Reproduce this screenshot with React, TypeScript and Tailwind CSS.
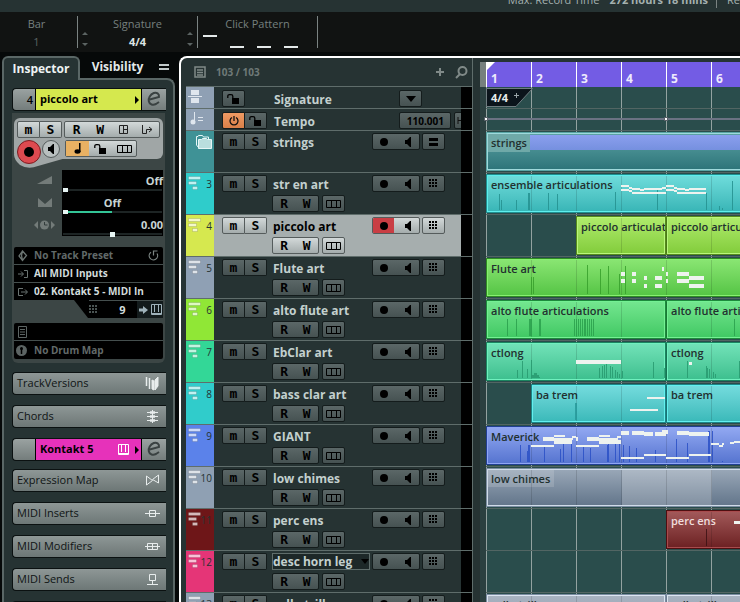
import type { ReactNode } from "react";

type Rect = [number, number, number, number];

interface Clip {
  start: number;
  bars?: number;
  name: string;
}

interface Track {
  no?: number;
  name: string;
  strip: string;
  clip?: string;
  label?: string;
  clips?: Clip[];
  tick?: string;
  // x, top, optional width
  ticks?: number[][];
  notes?: Rect[];
  selected?: boolean;
  menu?: boolean;
}

const BAR = 45;

const line = (y: number, pts: number[][]): Rect[] => pts.map(([a, b, dy]) => [a, y + dy, b - a, 2]);

const tracks: Track[] = [
  {
    no: 3,
    name: "str en art",
    strip: "bg-[#2fcccb]",
    clip: "from-[#6fdddc] to-[#37b5b6] border-[#1f8f90] inset-shadow-[0_0_0_1px_#5eeeec]",
    clips: [{ start: 0, name: "ensemble articulations" }],
    tick: "#25918f",
    ticks: [[13, 21], [15, 27], [30, 27], [42, 20, 2], [62, 20], [71, 21], [129, 19], [171, 16], [220, 20], [233, 33], [236, 35], [246, 8]],
    notes: [
      ...line(12, [[135, 143, 0], [143, 146, 2], [146, 154, 3], [154, 158, 4], [158, 176, 3], [176, 180, 2], [180, 188, 0], [188, 191, 2], [191, 199, 3], [199, 203, 4], [203, 220, 3]]),
      ...line(16, [[135, 143, 0], [143, 146, 1], [146, 180, 3], [180, 188, 0], [188, 191, 1], [191, 220, 3]]),
    ],
  },
  {
    no: 4,
    name: "piccolo art",
    strip: "bg-[#d6e84f]",
    clip: "from-[#b0ec6c] to-[#82cc3a] border-[#568a1c] inset-shadow-[0_0_0_1px_#b9f77c]",
    clips: [{ start: 2, bars: 2, name: "piccolo articulations" }, { start: 4, name: "piccolo articulations" }],
    selected: true,
  },
  {
    no: 5,
    name: "Flute art",
    strip: "bg-[#8fa0b4]",
    clip: "from-[#8ae673] to-[#54c444] border-[#2f8a22] inset-shadow-[0_0_0_1px_#86f070]",
    clips: [{ start: 0, name: "Flute art" }],
    tick: "#37a02c",
    ticks: [[45, 20], [47, 20], [101, 8], [114, 12], [122, 9], [133, 17], [139, 9]],
    notes: [
      [135, 15, 4, 4], [135, 22, 4, 4], [146, 15, 4, 4], [146, 22, 4, 4], [158, 19, 3, 4], [158, 27, 3, 4],
      [169, 19, 7, 4], [169, 27, 7, 4], [176, 10, 2, 4], [180, 15, 2, 4], [180, 22, 2, 4],
      [191, 15, 12, 4], [191, 22, 12, 4], [203, 19, 15, 4], [203, 27, 15, 4],
    ],
  },
  {
    no: 6,
    name: "alto flute art",
    strip: "bg-[#90e736]",
    clip: "from-[#74e790] to-[#3fc863] border-[#1d8a3c] inset-shadow-[0_0_0_1px_#74f093]",
    clips: [{ start: 0, bars: 4, name: "alto flute articulations" }, { start: 4, name: "alto flute articulations" }],
    tick: "#2aa04c",
    ticks: [[21, 20], [30, 20], [43, 20, 3], [53, 20, 2], [88, 20], [90, 20], [92, 20], [94, 20], [96, 20], [98, 20, 2], [101, 20], [103, 20], [105, 20], [107, 20], [248, 20]],
  },
  {
    no: 7,
    name: "EbClar art",
    strip: "bg-[#33d797]",
    clip: "from-[#72e3b9] to-[#3cbf8e] border-[#1b8560] inset-shadow-[0_0_0_1px_#70f0be]",
    clips: [{ start: 0, bars: 4, name: "ctlong" }, { start: 4, name: "ctlong" }],
    tick: "#289a70",
    ticks: [[31, 29], [36, 20], [41, 28], [45, 19], [46, 34, 2], [48, 32, 3], [51, 34, 2], [53, 36, 1], [113, 27], [116, 25], [118, 24], [120, 23], [124, 25], [126, 26], [129, 29], [131, 31], [133, 33], [136, 30], [167, 21], [178, 27], [201, 20], [220, 25], [221, 27], [223, 28], [227, 31], [229, 33], [253, 20]],
    notes: [[90, 19, 45, 4], [203, 21, 3, 3]],
  },
  {
    no: 8,
    name: "bass clar art",
    strip: "bg-[#30cccb]",
    clip: "from-[#74dcde] to-[#39b9b9] border-[#1c8587] inset-shadow-[0_0_0_1px_#62f0ee]",
    clips: [{ start: 1, bars: 3, name: "ba trem" }, { start: 4, name: "ba trem" }],
    tick: "#27999a",
    ticks: [[89, 20, 2]],
    notes: [[161, 14, 18, 2], [144, 26, 28, 2]],
  },
  {
    no: 9,
    name: "GIANT",
    strip: "bg-[#5b82ea]",
    clip: "from-[#93a9f2] to-[#5573cf] border-[#213f92] inset-shadow-[0_0_0_1px_#8fa6f5]",
    clips: [{ start: 0, name: "Maverick" }],
    tick: "#2a50c6",
    ticks: [[34, 20], [41, 26], [42, 20, 2], [58, 22], [74, 24], [77, 19], [85, 19], [97, 22], [104, 23], [121, 20], [122, 19], [129, 19], [133, 16], [137, 20], [143, 21], [150, 23], [169, 25], [190, 14], [201, 18], [222, 6, 2], [226, 6], [236, 36]],
    notes: [
      [57, 12, 11, 4], [68, 10, 11, 2], [68, 13, 19, 2], [68, 15, 18, 4], [86, 11, 4, 2], [90, 12, 2, 4], [45, 20, 23, 2],
      [101, 12, 12, 4], [113, 10, 11, 2], [113, 13, 19, 2], [113, 15, 22, 4], [131, 11, 4, 2], [90, 20, 23, 2],
      [135, 6, 8, 4], [146, 6, 12, 4], [158, 7, 9, 4], [169, 7, 11, 4], [176, 5, 6, 4], [191, 6, 12, 4], [203, 7, 20, 4],
      [135, 32, 23, 2], [158, 29, 22, 2], [180, 32, 23, 2], [203, 29, 22, 2],
      [225, 18, 8, 2], [233, 20, 4, 2], [236, 18, 2, 2], [244, 17, 4, 2], [248, 16, 6, 2],
    ],
  },
  {
    no: 10,
    name: "low chimes",
    strip: "bg-[#8fa0b3]",
    clip: "from-[#9aa8b8] to-[#62758a] border-[#7b8da2] inset-shadow-[0_0_0_1px_#cfdbe8]",
    clips: [{ start: 0, name: "low chimes" }],
  },
  {
    no: 11,
    name: "perc ens",
    strip: "bg-[#6e1618]",
    clip: "from-[#a35a5b] to-[#6c2022] border-[#4d0f11] inset-shadow-[0_0_0_1px_#a84b4d]",
    label: "text-[#f0dede]",
    clips: [{ start: 4, name: "perc ens" }],
    tick: "#3c1214",
    ticks: [[220, 20]],
    notes: [[248, 12, 6, 3]],
  },
  { no: 12, name: "desc horn leg", strip: "bg-[#e53577]", menu: true },
  {
    no: 13,
    name: "cello trill",
    strip: "bg-[#8fa0b3]",
    clip: "from-[#a9b4c2] to-[#8795a6] border-[#7b8da2] inset-shadow-[0_0_0_1px_#dbe5f0]",
    clips: [{ start: 0, bars: 4, name: "cello trill" }, { start: 4, name: "cello trill" }],
  },
];

const btn = "flex items-center justify-center rounded-[2px] border border-[#141c1c] bg-linear-to-b from-[#5b6767] to-[#465252] text-black";
const litBtn = "flex items-center justify-center rounded-[2px] border border-[#555c5c] bg-linear-to-b from-[#d3d9d9] to-[#a4acac] text-black";

function Speaker() {
  return (
    <svg width="7" height="10" viewBox="0 0 7 10" fill="currentColor"><path d="M0 3h2l3-3h1v10h-1l-3-3h-2z" /></svg>
  );
}

function Dots() {
  return (
    <svg width="9" height="9" viewBox="0 0 9 9" fill="currentColor">
      {[0, 3, 6].map((y) => [0, 3, 6].map((x) => <rect key={`${x}${y}`} x={x} y={y} width="2" height="2" />))}
    </svg>
  );
}

function Lanes() {
  return (
    <svg width="15" height="8" viewBox="0 0 15 8" fill="none" stroke="currentColor"><path d="M.5.5h14v7h-14zM5.5.5v7M10.5.5v7" /></svg>
  );
}

function Lock() {
  return (
    <svg width="13" height="10" viewBox="0 0 13 10" fill="currentColor">
      <path d="M5 4h7v6H5z" />
      <path d="M.8 4V2.2Q.8.7 2.5.7h1.600q1.700 0 1.700 1.500V5" fill="none" stroke="currentColor" strokeWidth="1.300" />
    </svg>
  );
}

function Swirl() {
  return (
    <svg width="14" height="16" viewBox="0 0 14 16" fill="none" stroke="#3a4242" strokeWidth="2">
      <path d="M1.800 8.800L12 6C12.500 2.500 9.500 1 6.800 2 3.200 3.300 1.200 7 1.800 10.200 2.500 13.600 6 14.500 9 13L12 11" />
    </svg>
  );
}

function Keys() {
  return (
    <svg width="11" height="11" viewBox="0 0 11 11" fill="none" stroke="currentColor"><path d="M.5.5h10v10h-10zM3.500 0v8M7.500 0v8" /><path d="M1 9.500h9" /></svg>
  );
}

function Glyph({ children }: { children: ReactNode }) {
  return <span className="block text-center font-['DejaVu_Sans_Mono'] text-[13px] leading-[15px] font-bold">{children}</span>;
}

function MuteSolo({ lit }: { lit?: boolean }) {
  return (
    <div className="flex h-[17px] w-[45px]">
      <button aria-label="Mute" className={`${lit ? litBtn : btn} flex-1 rounded-r-none`}><Glyph>m</Glyph></button>
      <button aria-label="Solo" className={`${lit ? litBtn : btn} flex-1 rounded-l-none border-l-0`}><Glyph>S</Glyph></button>
    </div>
  );
}

function RecMonitor({ lit }: { lit?: boolean }) {
  return (
    <div className={`${lit ? litBtn : btn} h-[17px] w-12 shrink-0 overflow-hidden`}>
      <button aria-label="Record enable" className={`flex h-full flex-1 items-center justify-center ${lit ? "bg-[#c93e44]" : ""}`}>
        <span className="size-2 rounded-full bg-black" />
      </button>
      <button aria-label="Monitor" className="flex h-full flex-1 items-center justify-center pl-1"><Speaker /></button>
    </div>
  );
}

function TrackRow({ track }: { track: Track }) {
  const lit = track.selected;
  const b = lit ? litBtn : btn;
  return (
    <div className="flex h-[42px] shrink-0 border-b border-[#5f6d6b]">
      <div className={`flex w-7 shrink-0 justify-between pt-[3px] pr-0.5 pl-0.5 ${track.strip}`}>
        <svg width="14" height="14" viewBox="0 0 14 14" fill="#fff" fillOpacity=".7" stroke="#000" strokeOpacity=".12">
          <path d="M.5.5h12v3h-12zM.5 5.500h8v3h-8zM4.500 10.500h5v3h-5z" />
        </svg>
        <span className="-ml-1 pt-0.5 text-[10px] leading-3 text-[#263333]">{track.no}</span>
      </div>
      <div className={`flex min-w-0 flex-1 pt-0.5 pl-2 ${lit ? "bg-[#a6aeae] text-black" : "text-[#c3d0ce]"}`}>
        <MuteSolo lit={lit} />
        <div className="ml-[5px] w-[100px]">
          {track.menu ? (
            <button className="flex h-[17px] w-[98px] items-center justify-between border border-[#5f6d6b] bg-[#1d2828] text-xs leading-4 font-bold whitespace-nowrap">
              {track.name}
              <span className="border-x-4 border-t-[5px] border-x-transparent border-t-black" />
            </button>
          ) : (
            <p className="h-[17px] pl-px text-xs leading-5 font-bold whitespace-nowrap">{track.name}</p>
          )}
          <div className="mt-[3px] flex gap-[3px]">
            <div className={`${b} h-[17px] w-[47px]`}>
              <button aria-label="Read automation" className="flex-1"><Glyph>R</Glyph></button>
              <button aria-label="Write automation" className="flex-1"><Glyph>W</Glyph></button>
            </div>
            <button aria-label="Lanes" className={`${b} h-[17px] w-[23px]`}><Lanes /></button>
          </div>
        </div>
        <RecMonitor lit={lit} />
        <button aria-label="Instrument" className={`${b} ml-0.5 h-[17px] w-[23px]`}><Dots /></button>
      </div>
      <div className="w-[11px] shrink-0 bg-black" />
    </div>
  );
}

function GridLines({ className }: { className: string }) {
  return (
    <div className="pointer-events-none absolute inset-0 flex overflow-hidden">
      {Array.from({ length: 40 }, (_, i) => (
        <span key={i} className={`w-[45px] shrink-0 border-l ${className}`} />
      ))}
    </div>
  );
}

function Lane({ track }: { track: Track }) {
  return (
    <div className="relative h-[42px] shrink-0 overflow-hidden border-b border-[#526563]">
      <GridLines className="border-[#93a2a0]" />
      {track.clips?.map((c) => (
        <div
          key={c.start}
          className={`absolute top-px h-[39px] overflow-hidden border bg-linear-to-b ${track.clip}`}
          style={{ left: c.start * BAR, width: c.bars ? c.bars * BAR : `calc(100% + 4px - ${c.start * BAR}px)` }}
        >
          {track.no === 10 && (
            <>
              <span className="absolute top-px left-px h-[17px] w-[66px] bg-white/15" />
              <span className="absolute top-px bottom-px left-[135px] w-[90px] bg-white/20" />
            </>
          )}
          <span className={`relative block pt-0.5 pl-1 text-[11px] leading-4 font-semibold whitespace-nowrap ${track.label ?? "text-[#22302f]"}`}>{c.name}</span>
        </div>
      ))}
      <svg className="absolute inset-0 h-full w-full">
        {track.clips && [1, 2, 3, 4, 5].filter((i) => i > track.clips![0].start).map((i) => (
          <rect key={i} x={i * BAR} y="3" width="1" height="35" opacity=".13" />
        ))}
        {track.ticks?.map(([x, y, w = 1], i) => (
          <rect key={i} x={x} y={y} width={w} height={37 - y} fill={track.tick} opacity=".85" />
        ))}
        {track.notes?.map(([x, y, w, h], i) => <rect key={i} x={x} y={y} width={w} height={h} fill="#eef3ef" />)}
      </svg>
    </div>
  );
}

function Section({ name, children }: { name: string; children: ReactNode }) {
  return (
    <button className="flex h-[23px] w-full shrink-0 items-center justify-between rounded-l-[4px] border border-r-0 border-[#0b1111] bg-linear-to-b from-[#8e9796] to-[#6d7776] pr-1.5 pl-1 text-[11px] text-[#0f1414]">
      {name}
      <svg width="15" height="15" viewBox="0 0 15 15" fill="none" stroke="#e8eded">{children}</svg>
    </button>
  );
}

function NameBar({ no, name, color, children }: { no?: number; name: string; color: string; children?: ReactNode }) {
  return (
    <div className="flex h-[23px] shrink-0 rounded-l-[4px] border border-r-0 border-[#0b1111] bg-linear-to-b from-[#9aa2a1] to-[#747d7c] text-black">
      <span className="w-[22px] pr-0.5 text-right text-[11px] leading-[22px] font-semibold">{no}</span>
      <button className={`flex flex-1 items-center border-x border-black pr-0.5 pl-1 text-[11px] font-bold ${color}`}>
        <span className="flex-1 text-left">{name}</span>
        {children}
        <span className="ml-1.5 border-y-4 border-l-[4px] border-y-transparent border-l-black" />
      </button>
      <button aria-label={`Edit ${name}`} className="flex w-6 items-start justify-center pt-0.5"><Swirl /></button>
    </div>
  );
}

function Param({ label, value, pos, className, track, children }: { label: string; value: string; pos: number; className: string; track: string; children: ReactNode }) {
  return (
    <div className="flex h-[22px]">
      <svg className="mt-1 mr-1.5 ml-auto" width="22" height="14" viewBox="0 0 22 14" fill="#737b79">{children}</svg>
      <label className="flex w-[101px] flex-col bg-black pt-[3px] text-[#c8d4d4]">
        <span className={`text-[11px] leading-4 font-bold ${className}`}>{value}</span>
        <input
          type="range"
          aria-label={label}
          defaultValue={pos}
          className={`mx-px block h-0.5 appearance-none [&::-webkit-slider-thumb]:size-[5px] [&::-webkit-slider-thumb]:appearance-none [&::-webkit-slider-thumb]:bg-[#e6f4f2] ${track}`}
        />
      </label>
    </div>
  );
}

function Inspector() {
  return (
    <aside className="ml-0.5 flex w-[173px] shrink-0 flex-col text-xs">
      <div className="flex h-[22px] shrink-0 items-end">
        <button className="relative z-10 -mb-0.5 h-6 w-[78px] rounded-t-md border-2 border-b-0 border-[#5a6766] bg-[#263333] text-xs font-bold text-[#eef3f3]">
          Inspector
        </button>
        <button className="h-[22px] flex-1 pr-1 text-xs font-bold text-[#e3eaea]">Visibility</button>
        <button aria-label="Inspector menu" className="mr-1.5 mb-2 h-1.5 w-2.5 border-y-2 border-[#c2caca]" />
      </div>
      <div className="flex flex-1 flex-col overflow-hidden rounded-tr-lg border-2 border-b-0 border-[#5a6766] bg-[#263333] pt-2 pr-[7px] pl-2">
        <NameBar no={4} name="piccolo art" color="bg-[#d5e84e]" />

        <div className="mt-0.5 w-[153px] shrink-0 rounded-b-md bg-[#3c4645] px-0.5 pt-[5px] pb-1">
          <div className="relative h-[41px] rounded-md bg-[#a0a6a6] p-[3px]">
            <svg className="absolute top-[36px] left-0" width="52" height="14" viewBox="0 0 52 14" fill="#a0a6a6"><path d="M0 0h52v4L24 12Q14 16 6 11 0 6 0 0z" /></svg>
            <div className="relative flex justify-between">
              <MuteSolo lit />
              <div className={`${litBtn} h-[17px] w-24`}>
                <button aria-label="Read" className="flex-1"><Glyph>R</Glyph></button>
                <button aria-label="Write" className="flex-1"><Glyph>W</Glyph></button>
                <button aria-label="Channel settings" className="flex flex-1 justify-center">
                  <svg width="10" height="10" viewBox="0 0 10 10" fill="none" stroke="#222"><path d="M.5.5h8v8h-8zM4.500.5v8M4.500 4.500h4" /></svg>
                </button>
                <button aria-label="Input transformer" className="flex flex-1 justify-center">
                  <svg width="11" height="10" viewBox="0 0 11 10" fill="none" stroke="#222"><path d="M.5 0v8.500h4v-4h5M7 2l3 2.500L7 7" /></svg>
                </button>
              </div>
            </div>
            <div className="relative mt-0.5 flex items-start">
              <button aria-label="Record enable" className="flex size-6 items-center justify-center rounded-full border border-[#7c1d22] bg-[#dd4a50]">
                <span className="size-2.5 rounded-full bg-black" />
              </button>
              <button aria-label="Monitor" className="ml-px flex size-[18px] items-center justify-center rounded-full border border-[#555c5c] bg-[#b9bfbf]"><Speaker /></button>
              <div className={`${litBtn} ml-[5px] h-[17px] w-[72px]`}>
                <button aria-label="Musical time base" className="flex h-full flex-1 items-center justify-center bg-[#e9b163]">
                  <svg width="8" height="11" viewBox="0 0 8 11"><path d="M5 0h1.500v9H5z" /><ellipse cx="3.500" cy="8.500" rx="3" ry="2.200" /></svg>
                </button>
                <button aria-label="Lock" className="flex flex-1 justify-center"><Lock /></button>
                <button aria-label="Lanes" className="flex flex-1 justify-center"><Lanes /></button>
              </div>
            </div>
          </div>

          <div className="mt-[11px]">
            <Param label="Volume" value="Off" pos={0} className="text-right" track="bg-[#1d2424]"><path d="M3 10h15V2z" /></Param>
            <Param label="Pan" value="Off" pos={0} className="text-center" track="bg-linear-to-r from-[#33c496] from-50% to-[#1d2424] to-50%"><path d="M4 2v9h14V2l-7 6z" /></Param>
            <Param label="Delay" value="0.00" pos={50} className="text-right" track="bg-[#1d2424]">
              <path d="M4 3v8L0 7zM17 3v8l4-4z" /><circle cx="10.500" cy="7" r="4.500" /><path d="M10.500 4v3h3" fill="none" stroke="#333d3c" />
            </Param>
          </div>

          <div className="mt-[11px] text-[10px] leading-[17px] font-bold text-[#d3dcdc]">
            <div className="rounded-t-[2px] bg-black">
              <button className="flex w-full items-center border-b border-[#454f4e] pr-1 pl-1 text-[#626a69]">
                <svg width="16" height="12" viewBox="0 0 16 12" fill="none" stroke="#6b7472"><path d="M4.500 1l4 4.500-4 5L1 6zM4.500 1l-1 4.500 1 5" strokeWidth="1.300" /></svg>
                <span className="flex-1 text-left">No Track Preset</span>
                <svg width="11" height="11" viewBox="0 0 11 11" fill="none" stroke="#7b8482" strokeWidth="1.200"><path d="M3 2.200a4.200 4.200 0 1 0 6 1.300M5.500 5.500V1h4" /></svg>
              </button>
              <button className="flex w-full items-center border-b border-[#454f4e] pl-1">
                <svg width="16" height="10" viewBox="0 0 16 10" fill="none" stroke="#6b7472"><path d="M0 5h5M3 2.500L5.500 5 3 7.500M6 1.500h3.500v7H6" /></svg>
                All MIDI Inputs
              </button>
              <button className="flex w-full items-center pl-1">
                <svg width="16" height="10" viewBox="0 0 16 10" fill="none" stroke="#6b7472"><path d="M5 1.500H.5v7H5M3 5h6M7 2.500L9.500 5 7 7.500" /></svg>
                02. Kontakt 5 - MIDI In
              </button>
            </div>
            <div className="flex justify-end">
              <svg width="15" height="18" viewBox="0 0 15 18"><path d="M0 0h15v18h-1z" /></svg>
              <button className="flex h-[18px] w-[74px] items-center border-t border-[#454f4e] bg-black text-[11px]">
                <span className="text-[#4a5453]"><Dots /></span>
                <span className="flex-1 pl-2.5 text-center">9</span>
                <span className="flex h-full w-[26px] items-center justify-around bg-[#131b1c] text-[#9fb2ba]">
                  <svg width="9" height="8" viewBox="0 0 9 8" fill="currentColor"><path d="M0 2.500h4V0l5 4-5 4V5.500H0z" /></svg>
                  <Keys />
                </span>
              </button>
            </div>
            <div className="mt-[5px] rounded-[2px] bg-black text-[#626a69]">
              <div className="flex h-[18px] items-center border-b border-[#454f4e] pl-1">
                <svg width="9" height="12" viewBox="0 0 9 12" fill="none" stroke="#5c6463"><path d="M.5.5h8v11h-8zM2 3.500h5M2 6h5M2 8.500h5" /></svg>
              </div>
              <button className="flex h-[18px] w-full items-center pl-0.5">
                <svg width="18" height="11" viewBox="0 0 18 11" fill="#5c6463"><circle cx="5.500" cy="5.500" r="5.500" /><path d="M5.500 4v5" stroke="#000" strokeWidth="1.500" /><circle cx="5.500" cy="3.500" r="1.500" fill="#000" /></svg>
                No Drum Map
              </button>
            </div>
          </div>
        </div>

        <div className="mt-[9px] flex flex-col gap-[10px]">
          <Section name="TrackVersions"><path d="M1.500 1v9M4.500 2v11" strokeWidth="1.500" /><path d="M7 4v9l2 1V5zM10 4l3-3v9l-3 4z" fill="#e8eded" /></Section>
          <Section name="Chords"><path d="M2 3.500h11M2 7.500h11M2 11.500h11" /><path d="M5 3.500h5M5 7.500h5M5 11.500h5" strokeWidth="2.500" /><path d="M7.500 1v13" /></Section>
          <div className="-mb-0.5">
            <NameBar name="Kontakt 5" color="bg-[#e632ba]">
              <span className="text-white"><Keys /></span>
            </NameBar>
          </div>
          <Section name="Expression Map"><path d="M1.500 3v9L7.500 7.500zM13.500 2v8L7.500 6.500z" /></Section>
          <Section name="MIDI Inserts"><path d="M0 7.500h15M4.500 4.500h6v6h-6z" /></Section>
          <Section name="MIDI Modifiers"><path d="M0 7.500h15M2.500 4.500h10v6h-10zM7.500 4v7" /></Section>
          <Section name="MIDI Sends"><path d="M4.500 2.500h6v6h-6zM7.500 8.500v4M2 12.500h11" /></Section>
          <Section name="Track Quick Controls"><path d="M2 7.500h11" /></Section>
        </div>
      </div>
    </aside>
  );
}

function Spinner({ label }: { label: string }) {
  return (
    <button aria-label={label} className="mb-0.5 flex flex-col gap-2 self-end">
      <span className="border-x-[3px] border-b-[3px] border-x-transparent border-b-[#5c6463]" />
      <span className="border-x-[3px] border-t-[3px] border-x-transparent border-t-[#5c6463]" />
    </button>
  );
}

function Transport() {
  return (
    <div className="flex h-10 shrink-0 bg-[#111312] py-1 text-[11px] leading-4 text-[#76807f]">
      <div className="flex w-[78px] flex-col items-center gap-[3px] border-r border-[#7b8382] pr-1 leading-[15px]">
        <span>Bar</span>
        <span className="text-[#5c6463]">1</span>
      </div>
      <div className="flex w-[120px] justify-between border-r border-[#7b8382] px-1">
        <Spinner label="Numerator" />
        <div className="flex flex-col items-center gap-[3px] leading-[15px]">
          <span>Signature</span>
          <span className="font-bold text-[#dfe5e5]">4/4</span>
        </div>
        <Spinner label="Denominator" />
      </div>
      <div className="w-[120px] border-r border-[#7b8382] px-[5px] text-center">
        <p className="leading-[15px]">Click Pattern</p>
        <div className="mt-1 flex h-[13px] items-end gap-[13px]">
          <span className="h-0.5 w-3.5 self-start bg-[#e4e9e9]" />
          <span className="h-0.5 w-3.5 bg-[#e4e9e9]" />
          <span className="h-0.5 w-3.5 bg-[#e4e9e9]" />
          <span className="h-0.5 w-3.5 bg-[#e4e9e9]" />
        </div>
      </div>
    </div>
  );
}

function TrackList() {
  return (
    <section className="flex w-[287px] shrink-0 flex-col border-r border-[#5f6d6b]">
      <div className="flex h-[29px] shrink-0 items-center border-b border-[#5f6d6b] pr-1 pl-2 text-[#808a88]">
        <svg width="12" height="12" viewBox="0 0 12 12" fill="none" stroke="currentColor" strokeWidth="1.500"><path d="M1 1h10v10H1zM3 4h6M3 6.500h6M3 9h6" /></svg>
        <span className="ml-2.5 flex-1 text-[10px] font-bold text-[#6f7a78]">103 / 103</span>
        <button aria-label="Add track"><svg width="8" height="8" viewBox="0 0 8 8" stroke="currentColor" strokeWidth="2"><path d="M4 0v8M0 4h8" /></svg></button>
        <button aria-label="Find tracks" className="ml-[11px]">
          <svg width="13" height="13" viewBox="0 0 13 13" fill="none" stroke="currentColor" strokeWidth="2"><circle cx="7.500" cy="5" r="4" /><path d="M5 8L1 12" /></svg>
        </button>
      </div>

      <div className="flex h-[22px] shrink-0 border-b border-[#5f6d6b]">
        <div className="w-7 bg-[#8fa0b4] pt-0.5 pl-0.5">
          <svg width="14" height="15" viewBox="0 0 14 15" fill="#dfe6ee"><path d="M3 1h8v5H3zM3 9h8v5H3zM0 7h14v1H0z" /></svg>
        </div>
        <div className="flex flex-1 pt-[3px] pl-2 text-[#c3d0ce]">
          <button aria-label="Lock signature" className={`${btn} h-[17px] w-[23px]`}><Lock /></button>
          <p className="ml-[29px] w-[125px] text-xs leading-5 font-bold">Signature</p>
          <button aria-label="Signature menu" className={`${btn} h-[17px] w-[23px]`}><span className="border-x-[5px] border-t-[6px] border-x-transparent border-t-black" /></button>
        </div>
        <div className="w-[11px] bg-black" />
      </div>

      <div className="flex h-[22px] shrink-0 border-b border-[#5f6d6b]">
        <div className="w-7 shrink-0 bg-[#8fa0b4] pt-[3px] pl-1">
          <svg width="14" height="13" viewBox="0 0 14 13" fill="#dfe6ee"><path d="M4 0h1v10H4zM8 5h5v1H8zM8 8h5v1H8z" /><circle cx="3" cy="10" r="2.500" /></svg>
        </div>
        <div className="flex flex-1 overflow-hidden pt-[3px] pl-2 text-[#c3d0ce]">
          <button aria-label="Activate tempo" className={`${btn} h-[17px] w-[23px] shrink-0 rounded-r-none from-[#ee9a63] to-[#d98049]`}>
            <svg width="10" height="10" viewBox="0 0 10 10" fill="none" stroke="#111" strokeWidth="1.300"><path d="M3 1.500a4 4 0 1 0 4 0M5 0v5" /></svg>
          </button>
          <button aria-label="Lock tempo" className={`${btn} h-[17px] w-[22px] shrink-0 rounded-l-none border-l-0`}><Lock /></button>
          <p className="ml-[7px] w-[125px] shrink-0 text-xs leading-5 font-bold">Tempo</p>
          <input aria-label="Tempo value" defaultValue="110.001" className={`${btn} h-[17px] w-[52px] shrink-0 pr-1.5 text-right text-[10px] font-bold`} />
          <button aria-label="Tempo scale" className={`${btn} ml-[3px] h-[17px] w-5 shrink-0 justify-start pl-0.5`}>
            <svg width="8" height="7" viewBox="0 0 8 7" stroke="#111"><path d="M1 0v7M1 3.500h7" /></svg>
          </button>
        </div>
        <div className="w-[11px] shrink-0 bg-black" />
      </div>

      <div className="flex h-[42px] shrink-0 border-b border-[#5f6d6b]">
        <div className="w-7 bg-[#3f9296] pt-1 pl-2.5">
          <svg width="16" height="14" viewBox="0 0 16 14" fill="#b9dede" stroke="#e6f6f6"><path d="M2.500 12.500L.5 10V1.500h1.500l.5-1h4l1 1.500h5v2" fill="none" /><path d="M2.500 4.500h3l1-1h4l1 1h4v9h-13z" /></svg>
        </div>
        <div className="flex flex-1 pt-0.5 pl-2 text-[#c3d0ce]">
          <MuteSolo />
          <p className="ml-[5px] w-[100px] pl-px text-xs leading-5 font-bold">strings</p>
          <RecMonitor />
          <button aria-label="Group editing" className={`${btn} ml-0.5 h-[17px] w-[23px]`}><span className="h-2 w-[9px] border-y-[3px] border-black" /></button>
        </div>
        <div className="w-[11px] bg-black" />
      </div>

      {tracks.map((t) => <TrackRow key={t.name} track={t} />)}
    </section>
  );
}

function Arrange() {
  return (
    <section className="ml-[7px] flex min-w-0 flex-1 pt-1">
      <div className="w-1.5 shrink-0 bg-[#2b4040]"><div className="h-[25px] bg-[#76807e]" /></div>
      <div className="flex min-w-0 flex-1 flex-col bg-[#2a4d4c]">
        <div className="relative flex h-[25px] shrink-0 overflow-hidden bg-[#735ce4]">
          {Array.from({ length: 40 }, (_, i) => (
            <span key={i} className="w-[45px] shrink-0 border-l border-white pt-[9px] pl-1 text-xs leading-4 font-bold text-[#eeeafc]">{i + 1}</span>
          ))}
          <svg className="absolute top-0 left-0" width="9" height="9" viewBox="0 0 9 9"><path d="M0 0h9L0 9z" fill="#fff" /></svg>
        </div>
        <div className="relative h-[22px] shrink-0 border-b border-[#526563]">
          <GridLines className="border-[#93a2a0]" />
          <svg className="absolute top-px left-0" width="48" height="19" viewBox="0 0 48 19"><path d="M.5.5h46L30 18.500H.5z" fill="#0b141b" stroke="#6f7c80" /></svg>
          <span className="absolute top-0.5 left-[5px] text-[11px] leading-[18px] font-bold text-[#e8eded]">4/4</span>
          <svg className="absolute top-1.5 left-[28px]" width="5" height="5" viewBox="0 0 5 5" stroke="#9aa5a8"><path d="M2.500 0v5M0 2.500h5" /></svg>
        </div>
        <div className="relative h-[22px] shrink-0 border-b border-[#526563]">
          <GridLines className="border-[#93a2a0]" />
          <svg className="absolute inset-0 h-full w-full overflow-visible">
            <rect y="9" width="100%" height="2" fill="#6b7283" />
            <path d="M-2 8h4v4h-4zM178 8h4v4h-4z" fill="#586068" />
            <path d="M-1 9h2v2h-2zM179 9h2v2h-2z" fill="#fff" />
          </svg>
        </div>
        <div className="relative h-[42px] shrink-0 overflow-hidden border-b border-[#526563]">
          <GridLines className="border-[#93a2a0]" />
          <div className="absolute top-px -right-1 left-0 h-[39px] border border-[#5aa6a6] bg-linear-to-b from-[#5ba2a4] to-[#2c7479] inset-shadow-[0_0_0_1px_#9ed9db]">
            <span className="absolute top-px left-px h-[18px] w-[42px] bg-[#6fa9a8]" />
            <span className="absolute top-0.5 right-0 left-[43px] h-[15px] bg-linear-to-b from-[#8b9fee] to-[#7590df]" />
            <span className="relative block pt-0.5 pl-1 text-[11px] leading-4 font-semibold text-[#22302f]">strings</span>
          </div>
        </div>
        {tracks.map((t) => <Lane key={t.name} track={t} />)}
      </div>
    </section>
  );
}

export default function App() {
  return (
    <div className="flex h-screen flex-col overflow-hidden bg-[#060909] font-['Open_Sans','Noto_Sans',sans-serif]">
      <div className="flex h-3 shrink-0 items-end justify-end overflow-hidden bg-[#263333] pb-1 text-[11px] leading-4 whitespace-nowrap text-[#a4b1af]">
        <span>Max. Record Time</span>
        <span className="ml-2.5 font-bold">272 hours 18 mins</span>
        <span className="mr-2.5 ml-2 h-4 w-px bg-[#7b8382]" />
        <span className="w-[13px] overflow-hidden">Record</span>
      </div>
      <Transport />
      <main className="flex min-h-0 flex-1 pt-1">
        <Inspector />
        <div className="ml-1 flex min-w-0 flex-1 overflow-hidden rounded-tl-lg border-t-2 border-l-2 border-white bg-[#263333] pl-[5px]">
          <TrackList />
          <Arrange />
        </div>
      </main>
    </div>
  );
}
